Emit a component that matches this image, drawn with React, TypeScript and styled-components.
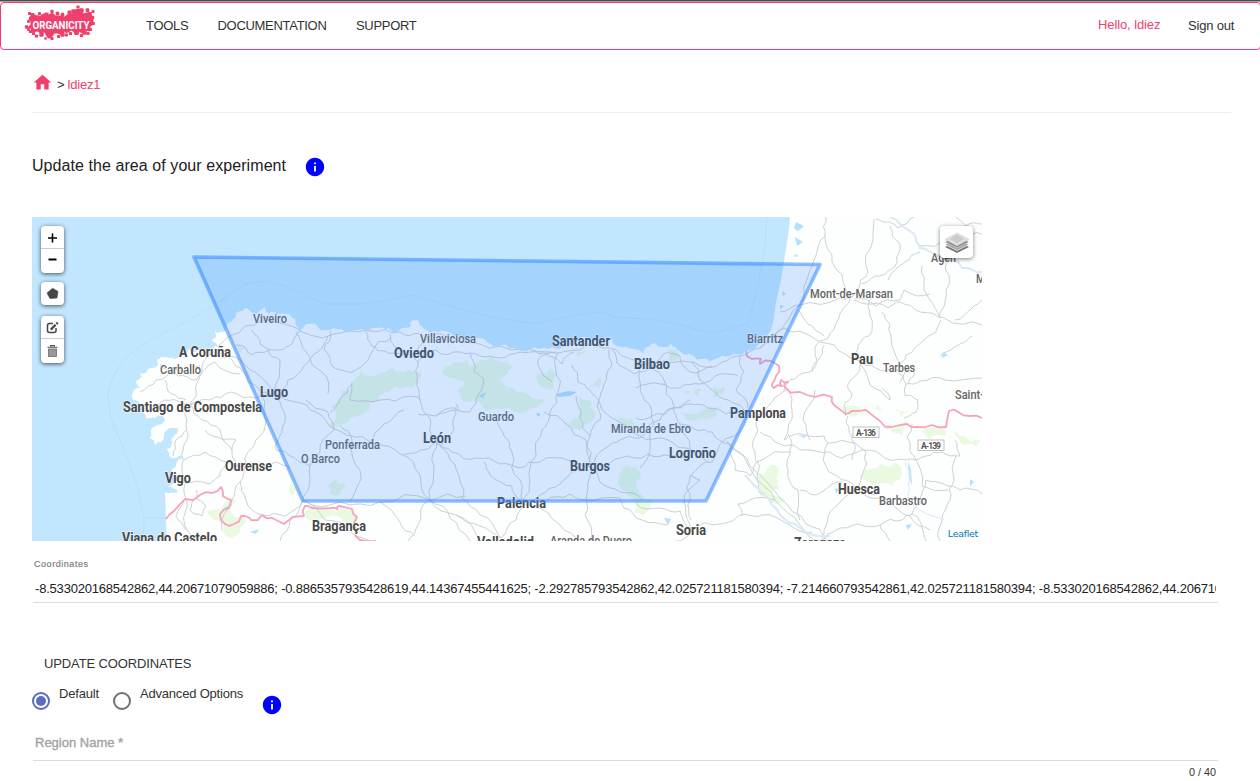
import React from 'react';
import styled, { createGlobalStyle, css } from 'styled-components';

const Global = createGlobalStyle`
  html, body { margin: 0; padding: 0; background: #fff; overflow: hidden; }
  body { font-family: "Liberation Sans", Arial, sans-serif; font-size: 13px; color: #333; }
  * { box-sizing: border-box; }
`;

const PINK = '#ef3f6b';

const Page = styled.div`
  width: 1260px;
  height: 781px;
  overflow: hidden;
  display: flex;
  flex-direction: column;
`;

const Strip = styled.div`
  height: 2px;
  flex: none;
  background: #4f4a4c;
  border-bottom: 1px solid #a5a0a2;
`;

const Header = styled.header`
  height: 48px;
  flex: none;
  width: 1261px;
  border: 1px solid ${PINK};
  border-radius: 4px;
  display: flex;
  align-items: flex-start;
  padding-left: 23px;
`;

const LogoSvg = styled.svg`
  display: block;
  width: 74px;
  height: 38px;
  margin-top: 1px;
`;

const Nav = styled.nav`
  display: flex;
  gap: 29px;
  margin-left: 48px;
  padding-top: 14px;
  flex: 1;
`;

const NavLink = styled.a<{ $w: number; $ls: number }>`
  width: ${p => p.$w}px;
  letter-spacing: ${p => p.$ls}px;
  white-space: nowrap;
  line-height: 18px;
  font-size: 13px;
  color: #333;
`;

const Session = styled.div`
  display: flex;
  gap: 28px;
  padding-top: 13px;
  padding-right: 26px;
  line-height: 18px;
  white-space: nowrap;
`;

const Greeting = styled.span`
  color: ${PINK};
  width: 62px;
  letter-spacing: -0.1px;
`;

const SignOut = styled.span`
  width: 46px;
  padding-top: 1px;
  letter-spacing: -0.2px;
`;

const Main = styled.main`
  padding: 0 29px 0 32px;
  display: flex;
  flex-direction: column;
`;

const Crumbs = styled.div`
  display: flex;
  align-items: center;
  height: 63px;
  padding-top: 7px;
  border-bottom: 1px solid #eee;
  gap: 3px;

  svg { display: block; margin: -4px 1px 0 0; }
  a { color: ${PINK}; letter-spacing: -0.2px; }
`;

const TitleRow = styled.div`
  display: flex;
  align-items: center;
  margin-top: 43px;
  height: 22px;
  gap: 17px;
`;

const Title = styled.h1`
  margin: -3px 0 0;
  font-weight: 400;
  font-size: 16px;
  line-height: 22px;
  width: 255px;
  white-space: nowrap;
  letter-spacing: 0.07px;
  color: #212121;
`;

const MapBox = styled.div`
  position: relative;
  width: 950px;
  height: 324px;
  margin-top: 39px;
  overflow: hidden;
  background: #fdfefe;
`;

const MapSvg = styled.svg`
  display: block;
  width: 950px;
  height: 324px;
`;

const Controls = styled.div`
  position: absolute;
  left: 9px;
  top: 9px;
  display: flex;
  flex-direction: column;
  gap: 9px;
`;

const ControlBar = styled.div<{ $last?: boolean }>`
  width: 23px;
  background: #fff;
  border-radius: 4px;
  box-shadow: 0 1px 4px rgba(0, 0, 0, 0.65);
  margin-top: ${p => (p.$last ? '2px' : 0)};
`;

const ControlButton = styled.div<{ $h: number; $line?: boolean }>`
  height: ${p => p.$h}px;
  display: flex;
  align-items: center;
  justify-content: center;
  ${p => p.$line && css`border-bottom: 1px solid #ccc;`}
  svg { display: block; }
`;

const Layers = styled.div`
  position: absolute;
  right: 9px;
  top: 9px;
  width: 33px;
  height: 32px;
  border-radius: 4px;
  background: #fff;
  box-shadow: 0 1px 4px rgba(0, 0, 0, 0.5);
  display: flex;
  align-items: center;
  justify-content: center;
`;

const Attribution = styled.div`
  position: absolute;
  right: 0;
  bottom: 0;
  height: 14px;
  padding: 0 4px 0 5px;
  background: rgba(255, 255, 255, 0.7);
  font: 9.4px/14px "DejaVu Sans", Verdana, sans-serif;
  letter-spacing: -0.25px;
  color: #0078a8;
`;

const Field = styled.div<{ $top: number }>`
  margin: ${p => p.$top}px 13px 0 1px;
  display: flex;
  flex-direction: column;
`;

const FieldLabel = styled.label`
  padding-left: 1px;
  font-size: 9px;
  line-height: 12px;
  letter-spacing: 0.55px;
  color: #808080;
  -webkit-text-stroke: 0.2px #808080;
`;

const FieldValue = styled.div`
  margin-top: 7px;
  height: 27px;
  padding: 0 0 0 2px;
  margin-right: 2px;
  line-height: 24px;
  overflow: hidden;
  white-space: nowrap;
  color: #212121;
  font-size: 13px;
  letter-spacing: -0.2px;
`;

const Rule = styled.div`
  height: 1px;
  background: #dcdcdc;
`;

const Placeholder = styled.div`
  height: 30px;
  padding: 1px 0 0 2px;
  line-height: 24px;
  color: #a2a2a2;
  -webkit-text-stroke: 0.35px #a2a2a2;
  font-size: 13px;
`;

const Counter = styled.div`
  align-self: flex-end;
  padding-right: 2px;
  margin-top: 4px;
  font-size: 10.8px;
  line-height: 14px;
`;

const SectionTitle = styled.div`
  margin: 52px 0 -1px 12px;
  line-height: 18px;
  letter-spacing: -0.13px;
`;

const Options = styled.div`
  display: flex;
  height: 42px;
  align-items: flex-start;
  padding-top: 12px;

  > svg { margin: 10px 0 0 18px; }
`;

const Option = styled.label<{ $w: number }>`
  display: flex;
  width: ${p => p.$w}px;
  gap: 9px;
  white-space: nowrap;
  line-height: 18px;
  font-size: 13px;
  letter-spacing: -0.2px;
`;

const Radio = styled.span<{ $on?: boolean }>`
  width: 18px;
  height: 18px;
  flex: none;
  margin-top: 8px;
  border-radius: 50%;
  border: 2px solid ${p => (p.$on ? '#5c6bc0' : '#6f6f6f')};
  display: flex;
  align-items: center;
  justify-content: center;

  &::after {
    content: '';
    width: 10px;
    height: 10px;
    border-radius: 50%;
    background: ${p => (p.$on ? '#5c6bc0' : 'transparent')};
  }
`;

const OptionText = styled.span`
  margin-top: 1px;
`;

type Pt = [number, number];

const parse = (s: string): Pt[] =>
  s.trim().split(/\s+/).map(p => p.split(',').map(Number) as Pt);

/* Midpoint displacement gives roads and borders an irregular course. */
const rough = (s: string, amount: number, depth = 2): string => {
  let pts = parse(s);
  for (let d = 0; d < depth; d++) {
    const out: Pt[] = [pts[0]];
    for (let i = 1; i < pts.length; i++) {
      const [ax, ay] = pts[i - 1];
      const [bx, by] = pts[i];
      const h = Math.sin(ax * 12.9898 + by * 78.233 + d * 3.1) * 43758.5453;
      const r = (h - Math.floor(h) - 0.5) * amount;
      out.push([(ax + bx) / 2 - (by - ay) * r, (ay + by) / 2 + (bx - ax) * r]);
      out.push([bx, by]);
    }
    pts = out;
  }
  return pts.map(p => `${p[0].toFixed(1)},${p[1].toFixed(1)}`).join(' ');
};

const SEA_EAST = '32,217 790,217 789,228 787,242 784,262 780,285 776,302 774,318 771,330';

const COAST =
  '766,338 757,346 745,351 730,356 715,359 703,359 692,355 680,351 671,344 655,343 648,347 643,354 628,348 616,346 604,338 598,340 588,338 575,343 562,347 548,349 530,349 512,348 500,346 488,343 468,341 450,333 434,331 424,329 418,320 413,320 410,327 402,328 393,332 383,328 368,331 345,332 330,330 300,331 296,325 293,318 288,314 280,314 274,312 268,314 265,307 261,310 257,314 251,312 247,308 242,311 237,312 232,320 227,324 224,332 215,331 216,337 212,341 219,345 212,349 205,350 196,352 188,349 182,354 174,359 165,357 158,359 158,364 150,368 140,373 142,377 136,383 140,388 133,392 134,400 139,402 143,412 147,419 155,418 162,416 165,420 157,425 151,432 150,438 155,445 164,436 173,428 178,428 177,434 172,438 171,447 166,449 169,456 175,458 182,454 183,458 176,465 172,474 180,476 183,481 174,482 168,487 178,492 165,492';

const SEA_WEST = '165,492 166,520 167,541 32,541';

const PARKS = [
  '361,371 378,374 393,368 408,370 420,372 418,382 405,387 388,392 378,400 370,403 352,417 343,424 334,430 328,426 336,412 330,406 342,397 340,392 352,384',
  '443,365 455,362 468,358 470,366 482,360 500,361 513,366 508,374 500,380 508,388 520,392 546,398 540,404 525,412 508,408 490,410 478,402 462,400 458,390 465,384 450,378 442,372',
  '540,373 550,368 556,375 552,390 540,386 536,378',
  '578,397 590,400 596,412 586,424 580,431 568,424 578,418 580,408',
  '614,416 632,418 635,424 620,426',
  '622,470 636,467 642,478 636,488 642,496 652,500 650,508 643,517 635,514 634,502 626,492 618,480',
  '588,386 602,378 600,388',
  '534,349 542,351 540,355', '577,352 584,350 586,353 578,356',
  '667,347 678,352 675,362 668,360',
  '684,392 700,388 698,396', '680,412 702,410 722,406 716,416 696,420',
  '712,388 724,387 722,394 714,397',
  '758,480 764,474 770,465 778,468 776,478 779,490 770,494 785,500 778,504 768,497 758,492',
  '860,475 872,469 890,467 894,463 901,468 900,480 882,483 866,481',
  '843,408 862,412 878,404 884,410 868,414 850,416', '884,425 898,426 906,418 902,436 892,432',
  '922,430 945,428 944,436 930,440', '895,409 908,410 902,416',
  '954,432 966,437 980,440 976,446 960,442',
  '207,511 230,498 236,500 232,514 246,520 240,530 232,538 222,532 224,522 212,518',
  '306,511 320,507 340,508 353,511 357,520 352,526 344,522 330,516 306,518',
  '328,486 336,478 346,486 340,495 330,494',
  '236,345 245,348 240,353', '290,484 296,490 292,496',
];

const LAKES = [
  '796,222 804,226 798,231 794,228', '795,237 803,242 797,246', '795,254 799,256 794,257',
  '556,394 568,391 577,392 570,396 558,397', '478,396 486,392 483,398',
  '664,518 671,519 668,525', '798,435 806,436 804,438', '908,461 911,470 912,485 909,478',
  '906,525 912,524 908,530', '970,479 974,482 970,486', '835,488 839,489 836,494',
  '460,415 455,402 458,406', '224,508 232,504 228,510', '250,532 259,529 256,534',
  '184,340 180,338', '783,291 786,294 782,296', '780,305 784,306 780,309', '943,352 948,355 942,358',
  '536,413 541,414 538,417',
];

const ROADS = [
  '219,345 226,353 236,366 248,382 262,393 274,394',
  '212,349 205,360 200,376 196,392 190,404 186,425 184,445 182,465 186,480 184,492 186,510 192,541',
  '205,352 222,358 240,360 255,372 274,394 288,380 304,366 318,352 328,336',
  '219,345 230,336 245,326 262,320 285,324 300,331 345,332 370,331 400,332 420,334',
  '160,364 178,376 196,380 215,362 240,374', '140,392 156,380 176,370 200,366',
  '148,410 164,400 182,404 200,404', '190,404 210,400 232,392 256,398 274,394',
  '190,404 202,420 220,430 232,450 236,465 262,470 275,462 290,468',
  '184,460 205,452 226,462 244,466 240,482 246,500 262,515 285,516 303,500',
  '184,482 210,484 220,476 226,464', '246,466 256,440 266,420 262,396',
  '274,394 284,412 282,432 276,450 290,456 310,466 308,490 303,500',
  '274,394 296,402 316,412 332,428 352,436 370,442 388,446 400,454 420,475 430,500 456,515 480,541',
  '236,345 252,355 268,350 280,360 274,394', '252,330 260,344 280,350 292,344 300,331',
  '296,332 306,352 322,372 328,394', '330,331 324,350 330,362 348,372 362,366 378,342 390,338',
  '366,332 372,346 384,351 404,354', '390,334 394,346 408,354 418,352 426,340 434,334',
  '408,354 418,362 417,380 420,400 430,418 436,440 434,466 430,500 418,525 408,541',
  '418,362 436,350 460,352 480,356 500,358 520,352 540,354 556,352',
  '434,334 460,342 500,346 550,352 580,350 610,348 634,360 652,366',
  '470,354 474,372 484,380 476,400 470,412 456,410 436,416 418,414',
  '420,400 410,396 380,400 350,400 352,382', '352,384 340,400 330,412',
  '404,454 420,450 436,442 452,452 476,458 500,464 520,468 540,462 570,461 590,466',
  '436,442 450,460 460,480 462,498 480,515 500,538', '436,416 456,408 454,430 440,446',
  '484,462 490,475 512,486 520,500', '498,418 504,436 512,452 520,480 522,502',
  '522,502 530,480 536,456 542,430 550,412 558,392 556,370 558,352',
  '544,412 566,424 586,440 590,466', '550,352 538,360 544,376 552,382',
  '522,502 540,495 560,484 575,470 590,466', '590,466 588,490 585,515 591,541',
  '590,466 600,482 620,492 642,500', '590,466 606,448 620,440 640,438 660,420 674,408 690,400',
  '576,396 580,418 590,436 590,466', '572,365 578,382 590,390 600,404 616,420 640,436 668,440 692,450',
  '600,466 620,458 648,454 670,456 692,454', '609,350 612,366 604,384 598,402 600,420 590,436',
  '638,362 640,382 644,400 654,424 650,450 640,468', '652,366 664,380 674,406 680,424 690,448 708,462',
  '652,366 676,362 700,366 722,362 740,356 760,348 772,340',
  '672,408 690,404 708,408 726,414 750,415', '692,362 700,380 712,390 728,400 750,415',
  '740,356 744,372 736,390 748,408', '652,366 668,352 680,356 690,372 712,366',
  '612,350 620,366 634,374 652,366', '574,352 562,364 548,356',
  '636,388 660,384 680,388 700,384 720,374 738,376', '636,418 652,416 672,408',
  '730,444 712,432 696,430 680,424', '730,444 752,472 775,500 800,525 820,541',
  '727,441 750,466 780,498 806,524 828,541', '750,415 758,430 755,452 757,480 762,495',
  '750,415 734,436 712,462 690,476 690,500 691,520', '690,476 700,480 688,490 686,515 691,530',
  '760,432 780,444 800,450 830,452 842,458 862,450 880,454 906,460 926,456',
  '758,415 772,402 788,390 792,410 784,440', '730,448 735,470 750,476 762,460 790,452',
  '784,440 790,436 824,436 828,443 826,466 842,480 858,488 875,495',
  '788,434 790,454 788,470 798,490 800,520', '800,490 822,492 842,482',
  '828,443 855,443 866,452 862,475 858,488', '858,488 840,502 830,512 824,530 822,541',
  '858,488 870,498 892,504 910,516 930,530', '820,541 836,530 858,524 880,525 902,520 912,514 920,504 926,480 944,484 960,490 982,494',
  '912,514 924,534 926,541', '880,525 890,541', '956,456 954,480 950,500 942,520 940,541',
  '848,416 849,430 852,440 852,460', '912,424 910,450 914,456 922,486 948,490',
  '926,456 942,452 960,456 955,440', '691,530 720,524 745,514 762,515 788,524 812,532',
  '742,516 738,504 755,498 775,500', '691,530 680,511 660,508 636,503', '522,502 544,510 560,525 580,541',
  '522,502 516,520 500,538 480,526 456,515', '303,500 340,502 380,502 430,500 466,496',
  '303,500 290,520 280,541', '303,500 325,520 344,526 370,541', '430,500 450,518 470,541',
  '380,502 400,522 415,536', '690,532 676,541', '545,502 570,494 584,500 620,498 624,508 642,520 668,525',
  '826,217 825,236 832,262 846,290 851,296', '825,236 814,260 806,282 800,305 788,320 772,335 760,348',
  '874,219 873,240 868,272 858,290 852,298', '851,296 838,320 828,338 815,348 812,372',
  '872,298 870,316 869,336 858,345 854,360', '855,298 876,306 900,300 904,290 930,294',
  '765,344 785,328 802,332 820,342 845,354 862,364 880,370 898,370 906,384 920,381 945,380 982,378',
  '854,300 866,304 888,308 900,302 920,312 944,318 982,325', '890,226 900,244 897,262 880,276 862,284',
  '920,252 905,262 888,280', '922,266 924,290 940,318 942,310 946,290 946,262 950,240',
  '941,320 924,340 906,355 898,370', '955,320 972,308 982,300', '940,356 960,344 972,336',
  '860,364 848,384 852,394 844,406 846,416', '860,364 870,385 890,400 882,388',
  '906,384 905,396 918,400 916,412 904,418', '900,382 914,366 908,384',
  '824,345 818,360 810,372 790,380 784,390', '780,312 800,305 840,298 850,298',
  '815,390 803,420 810,440', '798,310 808,324 824,336', '882,312 890,324 892,346 900,368',
  '920,246 948,240 964,232 982,234', '956,217 966,226 982,224', '876,219 890,222 898,228 914,217',
  '350,502 360,470 352,440 340,425', '310,466 320,452 334,430 328,412 306,400', '370,442 384,424 404,410',
  '205,430 224,440 236,440 232,450', '186,430 176,440 173,456', '165,380 172,394 186,400',
  '184,500 176,516 186,530', '196,498 190,510 202,516 206,506 198,500 196,490', '240,482 232,500 222,530',
];

const BORDERS = [
  '166,519 174,511 185,499 200,495 212,493 221,487 223,496 231,500 229,508 220,514 225,524 234,524 241,516 248,517 251,520 262,515 272,518 284,524 304,516 305,506 312,508 332,508 337,509 339,506 352,509 357,517 356,530 360,540 376,541',
  '746,351 752,359 761,359 760,364 771,361 779,366 776,376 772,384 774,388 782,386 781,380 788,382 784,386 800,392 815,397 832,397 834,405 846,414 852,411 866,410 880,421 892,427 907,424 917,427 932,425 946,427 949,411 958,412 970,416 982,418',
];

interface City { t: string; x: number; y: number; w: number; big?: boolean }

const CITIES: City[] = [
  { t: 'Viveiro', x: 253, y: 323, w: 34 },
  { t: 'A Coruña', x: 179, y: 357, w: 52, big: true },
  { t: 'Carballo', x: 160, y: 374, w: 41 },
  { t: 'Santiago de Compostela', x: 123, y: 412, w: 139, big: true },
  { t: 'Lugo', x: 260, y: 397, w: 28, big: true },
  { t: 'Ponferrada', x: 325, y: 449, w: 55 },
  { t: 'O Barco', x: 301, y: 463, w: 39 },
  { t: 'Ourense', x: 225, y: 471, w: 47, big: true },
  { t: 'Vigo', x: 165, y: 483, w: 26, big: true },
  { t: 'Bragança', x: 312, y: 531, w: 54, big: true },
  { t: 'Viana do Castelo', x: 122, y: 543, w: 95, big: true },
  { t: 'Villaviciosa', x: 420, y: 343, w: 56 },
  { t: 'Oviedo', x: 394, y: 358, w: 40, big: true },
  { t: 'Santander', x: 552, y: 346, w: 58, big: true },
  { t: 'Bilbao', x: 634, y: 369, w: 36, big: true },
  { t: 'Biarritz', x: 747, y: 343, w: 36 },
  { t: 'Guardo', x: 478, y: 421, w: 36 },
  { t: 'León', x: 423, y: 443, w: 28, big: true },
  { t: 'Miranda de Ebro', x: 611, y: 433, w: 80 },
  { t: 'Logroño', x: 669, y: 458, w: 47, big: true },
  { t: 'Burgos', x: 570, y: 471, w: 40, big: true },
  { t: 'Palencia', x: 497, y: 508, w: 49, big: true },
  { t: 'Valladolid', x: 477, y: 547, w: 57, big: true },
  { t: 'Aranda de Duero', x: 550, y: 545, w: 82 },
  { t: 'Pamplona', x: 730, y: 418, w: 56, big: true },
  { t: 'Soria', x: 676, y: 535, w: 30, big: true },
  { t: 'Zaragoza', x: 794, y: 547.5, w: 52, big: true },
  { t: 'Huesca', x: 838, y: 494, w: 42, big: true },
  { t: 'Barbastro', x: 879, y: 505, w: 48 },
  { t: 'Pau', x: 851, y: 364, w: 22, big: true },
  { t: 'Tarbes', x: 883, y: 372, w: 32 },
  { t: 'Mont-de-Marsan', x: 810, y: 297.5, w: 83 },
  { t: 'Agen', x: 931, y: 262, w: 25 },
  { t: 'Mo', x: 976, y: 283, w: 15 },
  { t: 'Saint-', x: 955, y: 399, w: 29 },
];

const SHIELDS = [
  { t: 'A-136', x: 853, y: 427 },
  { t: 'A-139', x: 918, y: 440 },
];

const Roads = () => (
  <g fill="none" stroke="#c9cbcd" strokeWidth="0.9" strokeLinejoin="round">
    {ROADS.map((r, i) => <polyline key={i} points={rough(r, 0.32)} />)}
  </g>
);

const Labels = () => (
  <g fontFamily="Roboto, sans-serif" stroke="#fff" strokeOpacity="0.6" strokeWidth="1.5" paintOrder="stroke">
    {CITIES.map(c => (
      <text
        key={c.t}
        x={c.x}
        y={c.y}
        fontSize={c.big ? 13.8 : 12.8}
        fontWeight={c.big ? 700 : 500}
        fill={c.big ? '#484848' : '#646464'}
        textLength={c.w}
        lengthAdjust="spacingAndGlyphs"
      >
        {c.t}
      </text>
    ))}
  </g>
);

const AreaMap = () => (
  <MapSvg viewBox="32 217 950 324">
    <rect x="32" y="217" width="950" height="324" fill="#fdfefe" />
    <g fill="#e9fae0">
      {PARKS.map((p, i) => <polygon key={i} points={rough(p + ' ' + p.split(' ')[0], 0.5)} />)}
    </g>
    <Roads />
    <polygon points={`${SEA_EAST} ${rough(COAST, 0.5, 2)} ${SEA_WEST}`} fill="#c1e6fe" />
    <g fill="#b3e0fb">
      {LAKES.map((p, i) => <polygon key={i} points={p} />)}
    </g>
    <g fill="none" stroke="#d9e9f8" strokeWidth="2">
      <polyline points={rough('890,217 902,226 914,234 920,248 940,256 962,268 982,272', 0.3)} />
      <polyline points={rough('745,475 765,495 780,515 800,528 830,536', 0.3)} />
      <polyline points={rough('905,462 910,480 908,500 944,520', 0.3)} strokeWidth="1" />
    </g>
    <g fill="none" stroke="#b7dcf5" strokeWidth="0.8">
      <polyline points="143,541 144,518 137,485 122,445 110,415 108,392 114,375 125,358 150,340 190,320 225,298 245,284 265,281 285,286 325,304 360,304 385,301 412,295 450,306 490,317 535,324 575,315 600,312 620,318 655,319 712,333 748,324 757,290 765,245 767,217" />
      <polyline points="144,518 165,518" />
    </g>
    <g fill="none" stroke="#f7a3bb" strokeWidth="1.8" strokeLinejoin="round">
      {BORDERS.map((b, i) => <polyline key={i} points={rough(b, 0.5, 1)} />)}
    </g>
    <Labels />
    {SHIELDS.map(s => (
      <g key={s.t}>
        <rect x={s.x} y={s.y} width="26" height="10.5" fill="#fff" stroke="#bbb" strokeWidth="0.9" />
        <text x={s.x + 3} y={s.y + 8.6} fontFamily="Roboto, sans-serif" fontSize="8.5" fontWeight="700" fill="#555" textLength="20">{s.t}</text>
      </g>
    ))}
    <polygon points="194,257 820,264.5 706,501 303,501" fill="#3388ff" fillOpacity="0.2" stroke="#3388ff" strokeOpacity="0.55" strokeWidth="3.6" strokeLinejoin="round" />
  </MapSvg>
);

const BLOBS: [number, number, number][] = [
  [5, 8, 1.5], [2, 21.5, 1.7], [4, 24, 1.4], [8, 9.5, 2], [15, 8, 1.5], [27.5, 5.8, 1.6], [22, 9, 2],
  [33, 8, 1.8], [38, 9, 1.8], [45, 7, 2], [49, 6, 2.2], [53.5, 1.5, 1.6], [57, 5, 2.2], [63, 4.6, 1.8], [68.5, 6, 1.5],
  [65, 9, 2.4], [68, 12, 1.7], [69, 18, 1.4], [66, 24, 1.5], [63.5, 28, 1.6], [60, 27, 2.2], [57, 30, 1.6],
  [52, 27, 2.4], [46, 28, 1.6], [42, 29.500, 1.5], [38, 29, 2.2], [34, 31, 1.6], [27.500, 33, 1.6], [25, 30.5, 2.4],
  [21, 33, 1.3], [17, 29, 2.2], [12, 30.500, 1.6], [9, 28, 1.6], [6, 26, 1.6], [4, 16, 1.4], [13, 12, 2.3], [53.5, 6, 2.6],
];

const Logo = () => (
  <LogoSvg viewBox="0 0 74 38">
    <g fill={PINK} transform="translate(0.5 1.5)">
      <polygon points="5,11 8,10 11,9 12,12 15,11 17,9 19,8 24,9 28,7 31,10 36,10 40,11 44,8 49,8 51,4 57,5 59,8 62,7 67,8 67,11 69,14 69,19 66,21 65,26 61,25 58,28 54,26 50,27 47,25 42,28 40,26 38,30 33,28 30,28 28,31 22,31 20,27 16,28 13,26 8,27 6,23 3,22 6,19 6,16 4,14" />
      {BLOBS.map(([x, y, r], i) => <rect key={i} x={x - r} y={y - r} width={r * 2} height={r * 2} rx={r * 0.55} />)}
    </g>
    <text x="8.5" y="24.6" fontFamily="Roboto, sans-serif" fontWeight="700" fontSize="11.2" fill="#fff" textLength="57" lengthAdjust="spacingAndGlyphs">ORGANICITY</text>
  </LogoSvg>
);

const InfoIcon = () => (
  <svg width="22" height="22" viewBox="0 0 24 24">
    <path fill="#0000ff" d="M12 2C6.48 2 2 6.48 2 12s4.48 10 10 10 10-4.48 10-10S17.52 2 12 2zm1 15h-2v-6h2v6zm0-8h-2V7h2v2z" />
  </svg>
);

const HomeIcon = () => (
  <svg width="21" height="21" viewBox="0 0 24 24">
    <path fill={PINK} d="M10 20v-6h4v6h5v-8h3L12 3 2 12h3v8z" />
  </svg>
);

const COORDS =
  '-8.533020168542862,44.20671079059886; -0.8865357935428619,44.14367455441625; -2.292785793542862,42.025721181580394; -7.214660793542861,42.025721181580394; -8.533020168542862,44.20671079059886';

export default function App() {
  return (
    <Page>
      <Global />
      <Strip />
      <Header>
        <Logo />
        <Nav>
          <NavLink $w={42.5} $ls={-0.3}>TOOLS</NavLink>
          <NavLink $w={109.5} $ls={-0.3}>DOCUMENTATION</NavLink>
          <NavLink $w={61} $ls={-0.3}>SUPPORT</NavLink>
        </Nav>
        <Session>
          <Greeting>Hello, ldiez</Greeting>
          <SignOut>Sign out</SignOut>
        </Session>
      </Header>
      <Main>
        <Crumbs>
          <HomeIcon />
          <span>&gt;</span>
          <a>ldiez1</a>
        </Crumbs>
        <TitleRow>
          <Title>Update the area of your experiment</Title>
          <InfoIcon />
        </TitleRow>
        <MapBox>
          <AreaMap />
          <Controls>
            <ControlBar>
              <ControlButton $h={23} $line>
                <svg width="11" height="11" viewBox="0 0 11 11"><path d="M1 6h9M5.5 1.5v9" stroke="#000" strokeWidth="1.6" /></svg>
              </ControlButton>
              <ControlButton $h={24}>
                <svg width="11" height="11" viewBox="0 0 11 11"><path d="M1.500 3.500h8" stroke="#000" strokeWidth="2" /></svg>
              </ControlButton>
            </ControlBar>
            <ControlBar>
              <ControlButton $h={23}>
                <svg width="13" height="13" viewBox="0 0 13 13"><path d="M6.6 1.2 12 4.4 11 11 4 11.6 1 6z" fill="#464646" stroke="#464646" strokeWidth=".6" strokeLinejoin="round" /></svg>
              </ControlButton>
            </ControlBar>
            <ControlBar $last>
              <ControlButton $h={23} $line>
                <svg width="13" height="13" viewBox="0 0 13 13" fill="none" stroke="#464646">
                  <path d="M7 2.5H3.5Q1.5 2.5 1.5 4.5V9.500Q1.500 11.500 3.500 11.500H8Q10 11.500 10 9.500V7" strokeWidth="1.5" />
                  <path d="M4.800 8.600 9.600 3.700" strokeWidth="2.300" />
                  <path d="M10.400 2.900 11.700 1.600" strokeWidth="2.300" />
                </svg>
              </ControlButton>
              <ControlButton $h={24}>
                <svg width="11" height="13" viewBox="0 0 11 13">
                  <path d="M3.500 1.500V.600H7.500V1.500M.500 2.200H10.500" fill="none" stroke="#555" strokeWidth="1.100" />
                  <rect x="1.500" y="4" width="8" height="7.500" fill="#999" stroke="#6a6a6a" strokeWidth=".8" />
                </svg>
              </ControlButton>
            </ControlBar>
          </Controls>
          <Layers>
            <svg width="26" height="26" viewBox="0 0 26 26">
              <path d="M13 12 25 18 13 24 1 18z" fill="#777" />
              <path d="M13 9 25 15.500 13 21.500 1 15.500z" fill="#a2a2a2" stroke="#fff" strokeWidth=".7" />
              <path d="M13 6 25 13 13 19 1 13z" fill="#848484" stroke="#fff" strokeWidth=".5" />
              <path d="M13 4 25 10.500 13 17 1 10.500z" fill="#dedede" stroke="#cfcfcf" strokeWidth=".5" />
              <path d="M13 5.500 20 10 13 14 6 10z" fill="#cbcbcb" />
            </svg>
          </Layers>
          <Attribution>Leaflet</Attribution>
        </MapBox>
        <Field $top={17}>
          <FieldLabel>Coordinates</FieldLabel>
          <FieldValue>{COORDS}</FieldValue>
        </Field>
        <Field $top={-2}><Rule /></Field>
        <SectionTitle>UPDATE COORDINATES</SectionTitle>
        <Options>
          <Option $w={81}>
            <Radio $on />
            <OptionText>Default</OptionText>
          </Option>
          <Option $w={130}>
            <Radio />
            <OptionText>Advanced Options</OptionText>
          </Option>
          <InfoIcon />
        </Options>
        <Field $top={16}>
          <Placeholder>Region Name *</Placeholder>
          <Rule />
          <Counter>0 / 40</Counter>
        </Field>
      </Main>
    </Page>
  );
}
